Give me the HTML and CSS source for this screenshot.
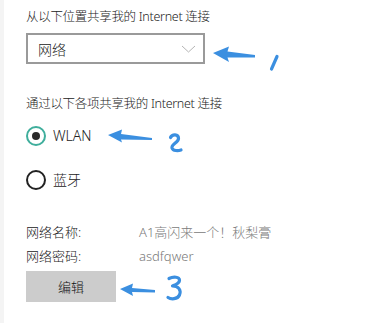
FILE: index.html
```html
<!DOCTYPE html>
<html lang="zh-CN">
<head>
<meta charset="utf-8">
<link rel="stylesheet" href="styles.css">
</head>
<body>
<div class="page">
  <div class="heading">从以下位置共享我的 Internet 连接</div>
  <div class="select">
    <span class="select-text">网络</span>
    <svg class="chevron" width="15" height="8" viewBox="0 0 15 8"><polyline points="1,1 7.5,7 14,1" fill="none" stroke="#b5b5b5" stroke-width="1"/></svg>
  </div>
  <div class="heading heading-2">通过以下各项共享我的 Internet 连接</div>
  <div class="radio-row first">
    <span class="radio checked"></span>
    <span class="radio-label">WLAN</span>
  </div>
  <div class="radio-row second">
    <span class="radio"></span>
    <span class="radio-label">蓝牙</span>
  </div>
  <div class="info-row name-row">
    <span class="info-label">网络名称:</span>
    <span class="info-value">A1高闪来一个！秋梨膏</span>
  </div>
  <div class="info-row pwd-row">
    <span class="info-label">网络密码:</span>
    <span class="info-value">asdfqwer</span>
  </div>
  <div class="button">编辑</div>
</div>
<svg class="annotations" width="377" height="323" viewBox="0 0 377 323">
  <g fill="#3b8fe0">
    <path d="M213,53 L229,46.5 L227.5,51.5 L255,55 L255,57.5 L227.5,57.5 L229,62 Z"/>
    <path d="M108,135 L122,129.5 L121,134 L152,138 L152,140 L121,139.5 L122,142.5 Z"/>
    <path d="M120,289 L133,283.5 L132,288 L155,290 L155,292.5 L132,292 L133,296 Z"/>
  </g>
  <g fill="none" stroke="#3b8fe0" stroke-width="3.2" stroke-linecap="round" stroke-linejoin="round">
    <path d="M277,56.5 L271.5,69"/>
    <path d="M170.5,137.5 C172,134 178.5,133.5 178.5,138.5 C178.5,142.5 171,144.5 172,148 C173,151 178,151 181,150"/>
    <path d="M169,278.5 C173,276.5 180,276.5 179.5,280.5 C179,284 175,285 172.5,286 C178.5,286 181.5,290 179.5,295 C177.5,299.5 171,299.5 168,297.5"/>
  </g>
</svg>
</body>
</html>
```
FILE: styles.css
```css
html, body {
  margin: 0;
  padding: 0;
  background: #ffffff;
}
body {
  width: 377px;
  height: 323px;
  position: relative;
  overflow: hidden;
  border-left: 4px solid #f4f4f4;
  box-sizing: border-box;
  font-family: "Noto Sans", "Noto Sans CJK SC", sans-serif;
  font-weight: 300;
  color: #1e1e1e;
}
.page {
  display: flex;
  flex-direction: column;
  align-items: flex-start;
  padding: 7px 0 0 22px;
}
.heading {
  font-size: 12.5px;
  letter-spacing: -0.3px;
  line-height: 20px;
  height: 20px;
  color: #222;
}
.heading-2 {
  margin-top: 30px;
}
.select {
  margin-top: 6px;
  box-sizing: border-box;
  width: 179px;
  height: 31px;
  border: 2px solid #9a9a9a;
  display: flex;
  align-items: center;
  justify-content: space-between;
  padding: 0 7px 0 10px;
}
.select-text {
  font-size: 14px;
  color: #222;
}
.chevron {
  display: block;
}
.radio-row {
  display: flex;
  align-items: center;
  height: 20px;
}
.radio-row.first {
  margin-top: 12px;
}
.radio-row.second {
  margin-top: 24px;
}
.radio {
  box-sizing: border-box;
  width: 20px;
  height: 20px;
  border-radius: 50%;
  border: 2px solid #222;
  display: flex;
  align-items: center;
  justify-content: center;
}
.radio.checked {
  border-color: #3fae9c;
}
.radio.checked::after {
  content: "";
  width: 8px;
  height: 8px;
  border-radius: 50%;
  background: #2a2a2a;
}
.radio-label {
  margin-left: 7px;
  font-size: 14px;
  line-height: 20px;
  color: #222;
}
.info-row {
  display: flex;
  align-items: center;
  height: 20px;
  font-size: 13px;
  line-height: 20px;
}
.name-row {
  margin-top: 32px;
}
.pwd-row {
  margin-top: 4px;
}
.info-label {
  width: 113px;
  color: #222;
}
.info-value {
  color: #7a7a7a;
}
.button {
  margin-top: 5px;
  width: 90px;
  height: 31px;
  background: #cccccc;
  display: flex;
  align-items: center;
  justify-content: center;
  font-size: 13px;
  color: #111;
}
.annotations {
  position: absolute;
  left: -4px;
  top: 0;
  pointer-events: none;
}
```
